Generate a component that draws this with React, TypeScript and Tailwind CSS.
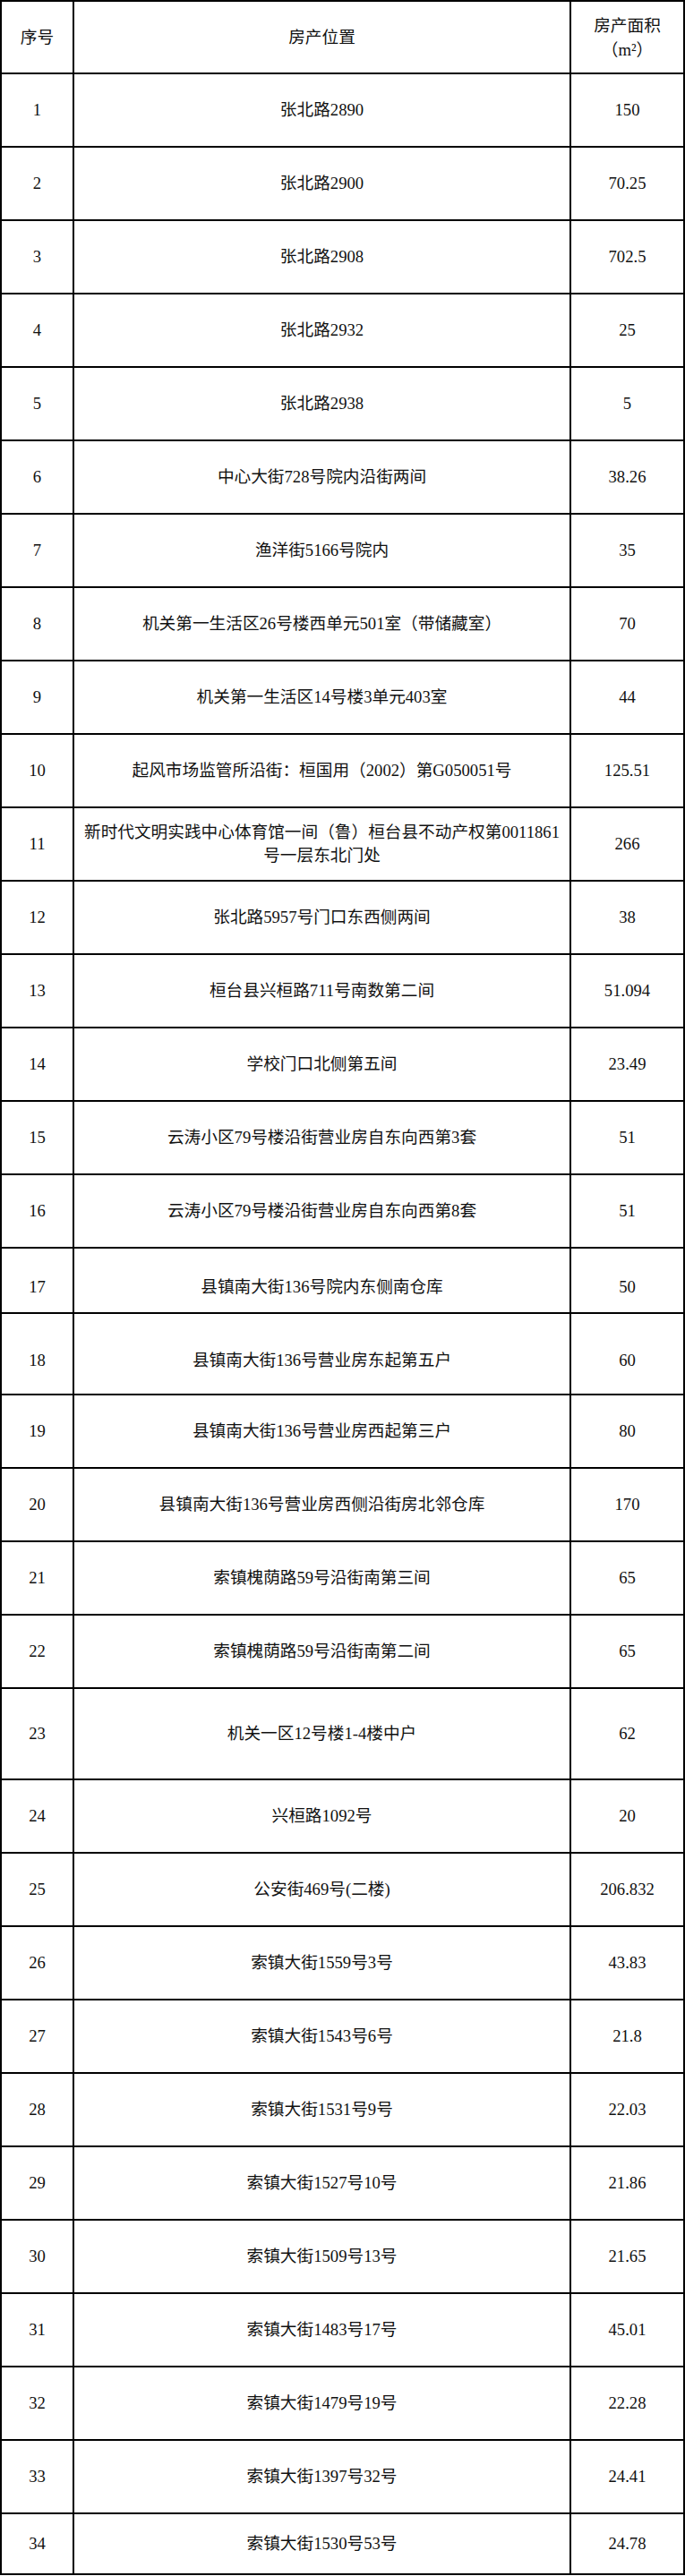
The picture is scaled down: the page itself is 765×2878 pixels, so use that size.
const ROWS: { no: number; place: string; area: string; h: string; shift?: boolean }[] = [
  { no: 1, place: "张北路2890", area: "150", h: "h-[82px]" },
  { no: 2, place: "张北路2900", area: "70.25", h: "h-[82px]" },
  { no: 3, place: "张北路2908", area: "702.5", h: "h-[82px]" },
  { no: 4, place: "张北路2932", area: "25", h: "h-[82px]" },
  { no: 5, place: "张北路2938", area: "5", h: "h-[82px]" },
  { no: 6, place: "中心大街728号院内沿街两间", area: "38.26", h: "h-[82px]" },
  { no: 7, place: "渔洋街5166号院内", area: "35", h: "h-[82px]" },
  { no: 8, place: "机关第一生活区26号楼西单元501室（带储藏室）", area: "70", h: "h-[82px]" },
  { no: 9, place: "机关第一生活区14号楼3单元403室", area: "44", h: "h-[82px]" },
  { no: 10, place: "起风市场监管所沿街：桓国用（2002）第G050051号", area: "125.51", h: "h-[82px]" },
  { no: 11, place: "新时代文明实践中心体育馆一间（鲁）桓台县不动产权第0011861号一层东北门处", area: "266", h: "h-[82px]" },
  { no: 12, place: "张北路5957号门口东西侧两间", area: "38", h: "h-[82px]" },
  { no: 13, place: "桓台县兴桓路711号南数第二间", area: "51.094", h: "h-[82px]" },
  { no: 14, place: "学校门口北侧第五间", area: "23.49", h: "h-[82px]" },
  { no: 15, place: "云涛小区79号楼沿街营业房自东向西第3套", area: "51", h: "h-[82px]" },
  { no: 16, place: "云涛小区79号楼沿街营业房自东向西第8套", area: "51", h: "h-[82px]" },
  { no: 17, place: "县镇南大街136号院内东侧南仓库", area: "50", h: "h-[73px]", shift: true },
  { no: 18, place: "县镇南大街136号营业房东起第五户", area: "60", h: "h-[91px]", shift: true },
  { no: 19, place: "县镇南大街136号营业房西起第三户", area: "80", h: "h-[82px]" },
  { no: 20, place: "县镇南大街136号营业房西侧沿街房北邻仓库", area: "170", h: "h-[82px]" },
  { no: 21, place: "索镇槐荫路59号沿街南第三间", area: "65", h: "h-[82px]" },
  { no: 22, place: "索镇槐荫路59号沿街南第二间", area: "65", h: "h-[82px]" },
  { no: 23, place: "机关一区12号楼1-4楼中户", area: "62", h: "h-[102px]" },
  { no: 24, place: "兴桓路1092号", area: "20", h: "h-[82px]" },
  { no: 25, place: "公安街469号(二楼)", area: "206.832", h: "h-[82px]" },
  { no: 26, place: "索镇大街1559号3号", area: "43.83", h: "h-[82px]" },
  { no: 27, place: "索镇大街1543号6号", area: "21.8", h: "h-[82px]" },
  { no: 28, place: "索镇大街1531号9号", area: "22.03", h: "h-[82px]" },
  { no: 29, place: "索镇大街1527号10号", area: "21.86", h: "h-[82px]" },
  { no: 30, place: "索镇大街1509号13号", area: "21.65", h: "h-[82px]" },
  { no: 31, place: "索镇大街1483号17号", area: "45.01", h: "h-[82px]" },
  { no: 32, place: "索镇大街1479号19号", area: "22.28", h: "h-[82px]" },
  { no: 33, place: "索镇大街1397号32号", area: "24.41", h: "h-[82px]" },
  { no: 34, place: "索镇大街1530号53号", area: "24.78", h: "h-[68px]" },
];

const cell = "flex items-center justify-center text-center border-r-2 border-black";

export default function App() {
  return (
    <div className="w-[765px] bg-white font-['Liberation_Serif','Noto_Sans_CJK_SC',serif] text-[18.67px] text-[#111]">
      <div className="border-l-2 border-t-2 border-black">
        <div className="grid h-[81px] grid-cols-[81px_555px_127px] border-b-2 border-black">
          <div className={cell}>序号</div>
          <div className={cell}>房产位置</div>
          <div className={`${cell} flex-col leading-[27px]`}>
            <span>房产面积</span>
            <span>（m²）</span>
          </div>
        </div>
        {ROWS.map((r) => (
          <div key={r.no} className={`grid grid-cols-[81px_555px_127px] border-b-2 border-black ${r.h}`}>
            <div className={`${cell} ${r.shift ? "pt-[14px]" : ""}`}>{r.no}</div>
            <div className={`${cell} px-1 leading-[26px] ${r.shift ? "pt-[14px]" : ""}`}>{r.place}</div>
            <div className={`${cell} ${r.shift ? "pt-[14px]" : ""}`}>{r.area}</div>
          </div>
        ))}
      </div>
    </div>
  );
}
